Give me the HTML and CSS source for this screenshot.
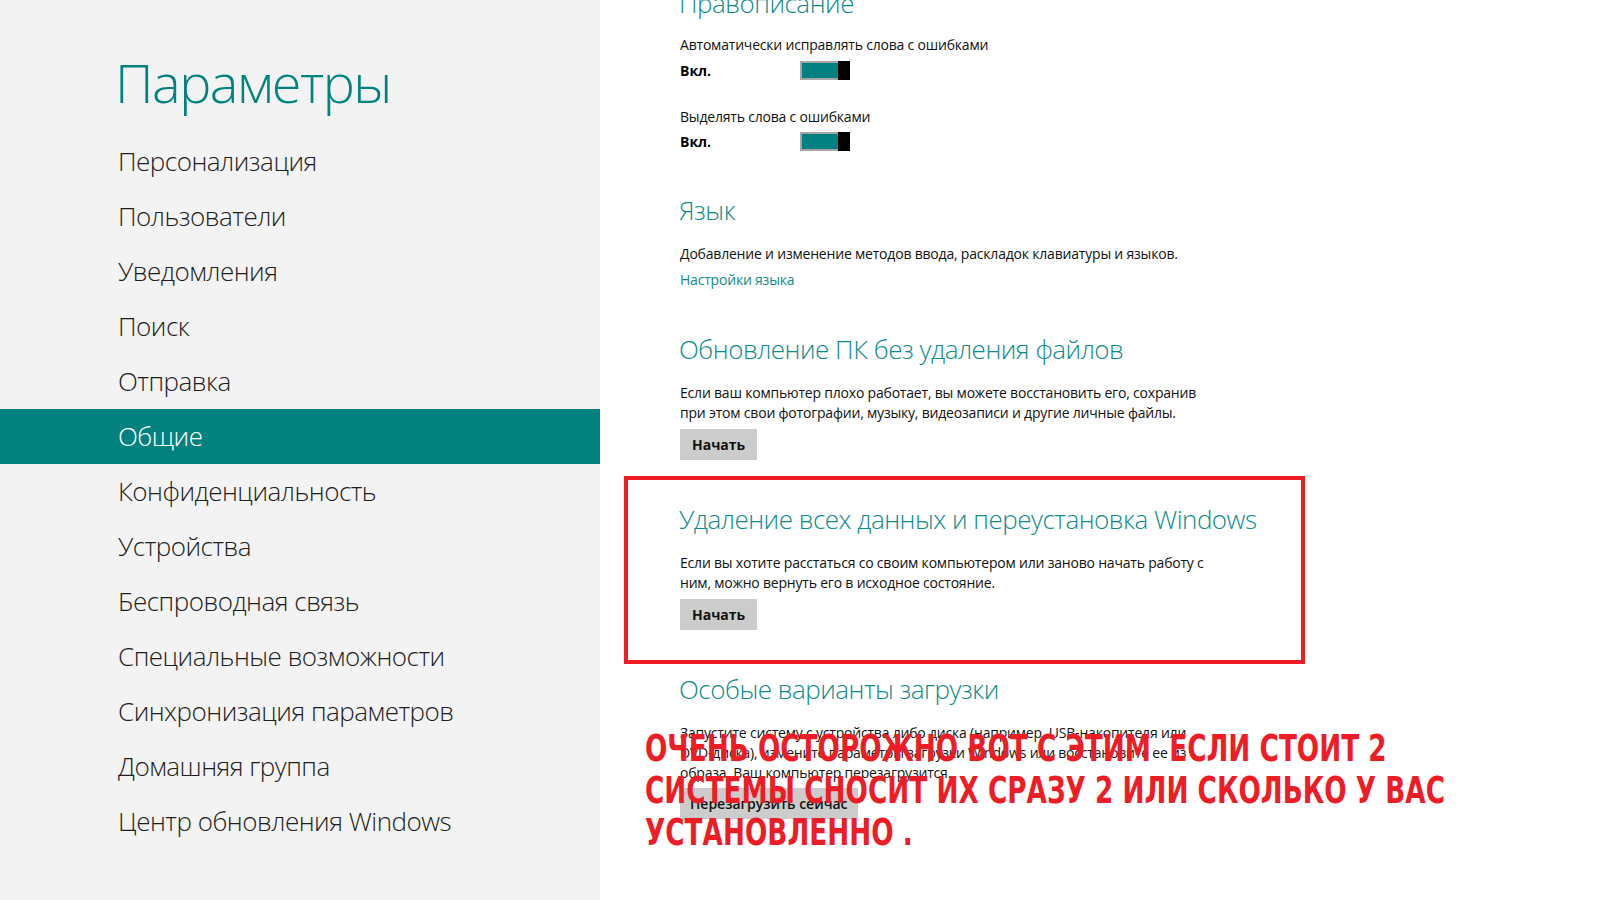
FILE: index.html
```html
<!DOCTYPE html>
<html lang="ru">
<head>
    <meta charset="UTF-8">
    <meta name="viewport" content="width=device-width, initial-scale=1.0">
    <title>Параметры</title>
    <link rel="stylesheet" href="styles.css">
</head>
<body>
    <div class="sidebar">
        <h1 class="title">Параметры</h1>
        <ul class="nav">
            <li>Персонализация</li>
            <li>Пользователи</li>
            <li>Уведомления</li>
            <li>Поиск</li>
            <li>Отправка</li>
            <li class="active">Общие</li>
            <li>Конфиденциальность</li>
            <li>Устройства</li>
            <li>Беспроводная связь</li>
            <li>Специальные возможности</li>
            <li>Синхронизация параметров</li>
            <li>Домашняя группа</li>
            <li>Центр обновления Windows</li>
        </ul>
    </div>

    <div class="content">
        <!-- Правописание -->
        <div class="section first">
            <h2>Правописание</h2>
            <p class="desc">Автоматически исправлять слова с ошибками</p>
            <div class="switch-row">
                <span class="state">Вкл.</span>
                <span class="toggle"><span class="thumb"></span></span>
            </div>
            <p class="desc second">Выделять слова с ошибками</p>
            <div class="switch-row tight">
                <span class="state">Вкл.</span>
                <span class="toggle"><span class="thumb"></span></span>
            </div>
        </div>

        <!-- Язык -->
        <div class="section">
            <h2>Язык</h2>
            <p class="desc">Добавление и изменение методов ввода, раскладок клавиатуры и языков.</p>
            <a class="link" href="#">Настройки языка</a>
        </div>

        <!-- Обновление -->
        <div class="section">
            <h2>Обновление ПК без удаления файлов</h2>
            <p class="desc">Если ваш компьютер плохо работает, вы можете восстановить его, сохранив<br>при этом свои фотографии, музыку, видеозаписи и другие личные файлы.</p>
            <button class="btn">Начать</button>
        </div>

        <!-- Удаление -->
        <div class="section">
            <h2>Удаление всех данных и переустановка Windows</h2>
            <p class="desc">Если вы хотите расстаться со своим компьютером или заново начать работу с<br>ним, можно вернуть его в исходное состояние.</p>
            <button class="btn">Начать</button>
        </div>

        <!-- Особые варианты -->
        <div class="section">
            <h2>Особые варианты загрузки</h2>
            <p class="desc">Запустите систему с устройства либо диска (например, USB-накопителя или<br>DVD-диска), измените параметры загрузки Windows или восстановите ее из<br>образа. Ваш компьютер перезагрузится.</p>
            <button class="btn normal">Перезагрузить сейчас</button>
        </div>

        <!-- пометки поверх скриншота -->
        <div class="mark-box"></div>
        <div class="mark-text">ОЧЕНЬ ОСТОРОЖНО ВОТ С ЭТИМ&nbsp; ЕСЛИ СТОИТ 2<br>СИСТЕМЫ СНОСИТ ИХ СРАЗУ 2 ИЛИ СКОЛЬКО У ВАС<br>УСТАНОВЛЕННО .</div>
    </div>
</body>
</html>
```

FILE: styles.css
```css
body {
    margin: 0;
    width: 1600px;
    height: 900px;
    overflow: hidden;
    display: flex;
    font-family: 'Open Sans', 'Noto Sans', sans-serif;
    background: #ffffff;
    color: #000;
}
/* Левая колонка */
.sidebar {
    width: 600px;
    flex-shrink: 0;
    background-color: #f3f3f3;
}
.title {
    margin: 44px 0 0 115px;
    font-size: 54px;
    font-weight: 300;
    line-height: 76px;
    color: #00827f;
    letter-spacing: -1.5px;
}
.nav {
    list-style: none;
    margin: 14px 0 0 0;
    padding: 0;
}
.nav li {
    height: 55px;
    line-height: 54px;
    padding-left: 118px;
    font-size: 26px;
    font-weight: 300;
    color: #1e1e1e;
    letter-spacing: -0.5px;
}
.nav li.active {
    background-color: #02817f;
    color: #fff;
}
/* Правая часть */
.content {
    position: relative;
    flex: 1;
    padding-left: 80px;
}
.section {
    margin-top: 41px;
}
.section.first {
    margin-top: -15px;
}
.section h2 {
    margin: 0 0 0 -1px;
    font-size: 26px;
    font-weight: 300;
    line-height: 36px;
    color: #0f8c8b;
    letter-spacing: -0.5px;
}
.desc {
    margin: 16px 0 0 0;
    font-size: 14px;
    line-height: 20px;
    color: #111;
    letter-spacing: -0.2px;
}
.first .desc {
    margin-top: 14px;
}
.first .desc.second {
    margin-top: 27px;
}
.switch-row {
    display: flex;
    align-items: center;
    margin-top: 6px;
}
.switch-row.tight {
    margin-top: 5px;
}
.state {
    width: 120px;
    font-size: 14px;
    font-weight: 700;
}
.toggle {
    display: flex;
    justify-content: flex-end;
    width: 46px;
    height: 15px;
    border: 2px solid #a6a6a6;
    background-color: #008080;
}
.thumb {
    width: 12px;
    height: 19px;
    margin-top: -2px;
    margin-right: -2px;
    background-color: #000;
}
.link {
    display: block;
    margin-top: 6px;
    font-size: 14px;
    line-height: 20px;
    color: #0f8c8b;
    text-decoration: none;
    letter-spacing: -0.2px;
}
.btn {
    display: block;
    margin-top: 6px;
    height: 31px;
    padding: 0 12px;
    border: none;
    background-color: #cccccc;
    font-family: inherit;
    font-size: 14px;
    font-weight: 700;
    color: #111;
}
.btn.normal {
    margin-top: 5px;
    padding: 0 10px;
    font-weight: 600;
}
/* Красная рамка и надпись */
.mark-box {
    position: absolute;
    left: 24px;
    top: 476px;
    width: 673px;
    height: 180px;
    border: 4px solid #ee1c25;
}
.mark-text {
    position: absolute;
    left: 45px;
    top: 727px;
    font-family: 'Liberation Sans Narrow', 'DejaVu Sans Condensed', sans-serif;
    font-size: 38px;
    font-weight: 700;
    line-height: 42px;
    color: #ee1c25;
    white-space: nowrap;
    transform: scaleX(0.77);
    transform-origin: left top;
}
```
